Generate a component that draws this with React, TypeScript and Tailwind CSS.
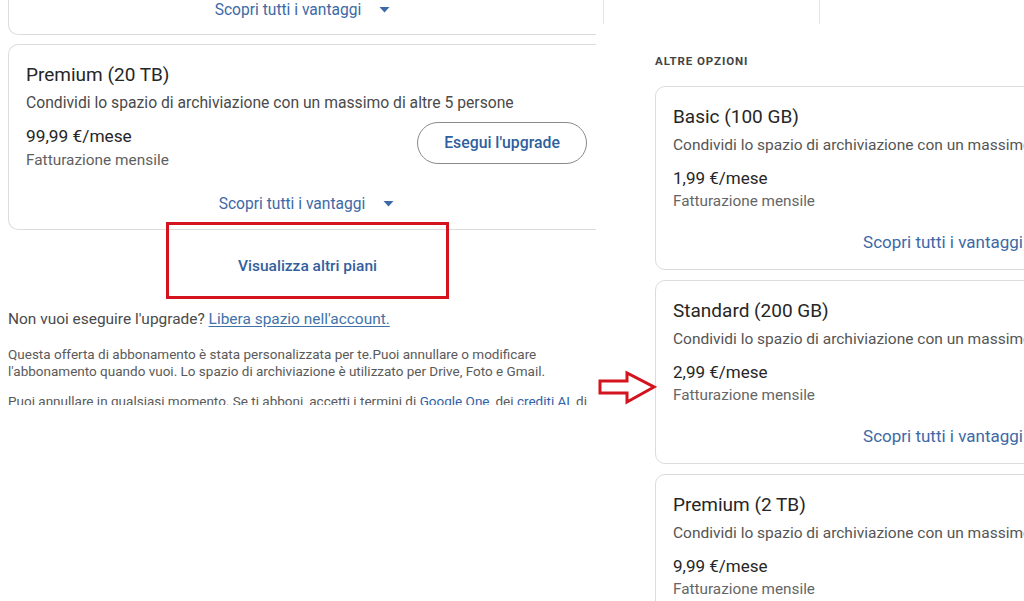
import type { ReactNode } from 'react';

const font = { fontFamily: 'Roboto, "Noto Sans", Arial, sans-serif' };

function Caret({ className = '' }: { className?: string }) {
  return (
    <svg viewBox="0 0 10 6" className={`inline-block h-[6px] w-[11px] ${className}`} fill="currentColor">
      <path d="M0 0h10L5 5.5z" />
    </svg>
  );
}

function Scopri({ size = 'text-[15.6px] leading-5', gap = 'gap-[18px]' }: { size?: string; gap?: string }) {
  return (
    <div className={`flex items-center justify-center text-[#3d69a6] ${gap} ${size}`}>
      <span>Scopri tutti i vantaggi</span>
      <Caret />
    </div>
  );
}

function PlanCard({ title, price, children }: { title: string; price: string; children?: ReactNode }) {
  return (
    <div className="w-[590px] shrink-0 rounded-[10px] border border-[#dcdcdc] bg-white pb-[16px] pl-[17px] pt-[18px]">
      <p className="text-[19px] leading-6 text-[#262626]">{title}</p>
      <p className="mt-[6px] whitespace-nowrap text-[15.5px] leading-5 text-[#555]">
        Condividi lo spazio di archiviazione con un massimo di altre 2 persone
      </p>
      <p className="mt-3 text-[17px] leading-[22px] text-[#262626]">{price}</p>
      <p className="mt-[2px] text-[15.3px] leading-5 text-[#666]">Fatturazione mensile</p>
      {children}
    </div>
  );
}

export default function App() {
  return (
    <div className="relative flex h-[601px] w-[1024px] overflow-hidden bg-white" style={font}>
      {/* pannello sinistro */}
      <div className="h-[405px] w-[597px] shrink-0 overflow-hidden">
        <div className="ml-2 h-[35px] w-[588px] rounded-bl-[10px] border-b border-l border-[#dcdcdc]">
          <Scopri />
        </div>

        <div className="ml-2 mt-[9px] w-[588px] rounded-l-[10px] border-y border-l border-[#dcdcdc] pb-[15px] pl-[17px] pr-[9px] pt-[18px]">
          <p className="text-[19px] leading-6 text-[#262626]">Premium (20 TB)</p>
          <p className="mt-[6px] text-[15.7px] leading-5 text-[#4a4a4a]">
            Condividi lo spazio di archiviazione con un massimo di altre 5 persone
          </p>
          <div className="mt-[9px] flex items-center justify-between">
            <div className="pt-[3px]">
              <p className="text-[17.3px] leading-[22px] text-[#262626]">99,99 €/mese</p>
              <p className="mt-[3px] text-[15.4px] leading-5 text-[#5f5f5f]">Fatturazione mensile</p>
            </div>
            <button className="-mt-[6px] h-[42px] w-[170px] rounded-full border border-[#8a8a8a] text-[15.8px] font-medium text-[#2f5f9e]">
              Esegui l'upgrade
            </button>
          </div>
          <div className="mt-[24px]">
            <Scopri />
          </div>
        </div>

        <div className="relative ml-[166px] mt-[-8px] flex h-[77px] w-[283px] items-center justify-center border-[3px] border-[#d3141f] pt-[12px]">
          <span className="text-[15.5px] font-medium text-[#33609c]">Visualizza altri piani</span>
        </div>

        <p className="ml-2 mt-[10px] text-[15.45px] leading-5 text-[#4a4a4a]">
          Non vuoi eseguire l'upgrade?{' '}
          <span className="text-[#3f73a8] underline underline-offset-2">Libera spazio nell'account.</span>
        </p>

        <p className="ml-2 mt-[17px] whitespace-nowrap text-[13.5px] leading-[17px] text-[#5a5a5a]">
          Questa offerta di abbonamento è stata personalizzata per te.Puoi annullare o modificare
          <br />
          l'abbonamento quando vuoi. Lo spazio di archiviazione è utilizzato per Drive, Foto e Gmail.
        </p>
        <p className="ml-2 mt-[13px] whitespace-nowrap text-[13.5px] leading-[17px] text-[#5a5a5a]">
          Puoi annullare in qualsiasi momento. Se ti abboni, accetti i termini di{' '}
          <span className="text-[#2f62a8]">Google One</span>, dei <span className="text-[#2f62a8]">crediti AI</span>, di
        </p>
      </div>

      {/* pannello destro */}
      <div className="w-[427px] shrink-0 overflow-hidden">
        <div className="ml-[6px] h-[24px] w-[217px] border-x border-[#e6e6e6]" />
        <p className="ml-[58px] mt-[30px] text-[11.5px] font-bold leading-[14px] tracking-[0.08em] text-[#444]">
          ALTRE OPZIONI
        </p>
        <div className="ml-[58px] mt-[18px] flex flex-col gap-[10px]">
          <PlanCard title="Basic (100 GB)" price="1,99 €/mese">
            <div className="mt-[20px]">
              <Scopri size="text-[17px] leading-[22px]" gap="gap-[20px]" />
            </div>
          </PlanCard>
          <PlanCard title="Standard (200 GB)" price="2,99 €/mese">
            <div className="mt-[20px]">
              <Scopri size="text-[17px] leading-[22px]" gap="gap-[20px]" />
            </div>
          </PlanCard>
          <PlanCard title="Premium (2 TB)" price="9,99 €/mese" />
        </div>
      </div>

      {/* freccia rossa */}
      <svg className="absolute left-[597px] top-[370px] h-[36px] w-[60px]" viewBox="0 0 60 36" fill="white">
        <path d="M3 11H30V3L57 17L30 32V23H3Z" stroke="#d3141f" strokeWidth="3" strokeLinejoin="miter" />
      </svg>
    </div>
  );
}
